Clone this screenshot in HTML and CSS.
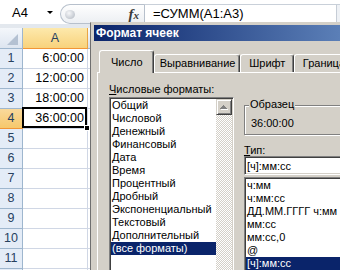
FILE: index.html
```html
<!DOCTYPE html>
<html>
<head>
<meta charset="utf-8">
<link rel="stylesheet" href="styles.css">
</head>
<body>
<div class="excel">
  <div class="fbar">
    <div class="namebox"><span class="nb-txt">A4</span><span class="dd"></span></div>
    <div class="pill"><span class="knob"></span><span class="fx">f<span class="fx-x">x</span></span></div>
    <div class="formula">=СУММ(A1:A3)</div>
    <div class="fexp"></div>
  </div>
  <div class="gap"></div>
  <div class="sheet">
    <div class="corner"><span class="tri"></span></div>
    <div class="ch sel">A</div>
    <div class="ch"></div>

    <div class="rh">1</div><div class="c">6:00:00</div><div class="c"></div>
    <div class="rh">2</div><div class="c">12:00:00</div><div class="c"></div>
    <div class="rh">3</div><div class="c">18:00:00</div><div class="c"></div>
    <div class="rh sel">4</div><div class="c act">36:00:00<span class="handle"></span></div><div class="c"></div>
    <div class="rh">5</div><div class="c"></div><div class="c"></div>
    <div class="rh">6</div><div class="c"></div><div class="c"></div>
    <div class="rh">7</div><div class="c"></div><div class="c"></div>
    <div class="rh">8</div><div class="c"></div><div class="c"></div>
    <div class="rh">9</div><div class="c"></div><div class="c"></div>
    <div class="rh">10</div><div class="c"></div><div class="c"></div>
    <div class="rh">11</div><div class="c"></div><div class="c"></div>
    <div class="rh"></div><div class="c"></div><div class="c"></div>
  </div>
</div>

<div class="dlg">
  <div class="title">Формат ячеек</div>
  <div class="dbody">
    <div class="tabs">
      <div class="tab sel t1">Число</div>
      <div class="tab t2">Выравнивание</div>
      <div class="tab t3">Шрифт</div>
      <div class="tab t4">Граница</div>
    </div>
    <div class="panel">
      <div class="lcol">
        <div class="lbl"><u>Ч</u>исловые форматы:</div>
        <div class="list cats">
          <div class="items">
            <div class="item">Общий</div>
            <div class="item">Числовой</div>
            <div class="item">Денежный</div>
            <div class="item">Финансовый</div>
            <div class="item">Дата</div>
            <div class="item">Время</div>
            <div class="item">Процентный</div>
            <div class="item">Дробный</div>
            <div class="item">Экспоненциальный</div>
            <div class="item">Текстовый</div>
            <div class="item">Дополнительный</div>
            <div class="item sel">(все форматы)</div>
          </div>
          <div class="vscroll">
            <div class="sbtn"><svg class="arrow" width="8" height="5" viewBox="0 0 8 5" shape-rendering="crispEdges"><path d="M4 1h1v1h1v1h1v1h1v1H1V4h1V3h1V2h1z" fill="#fff"/><path d="M3 0h1v1h1v1h1v1h1v1H0V3h1V2h1V1h1z" fill="#808080"/></svg></div>
            <div class="track"></div>
          </div>
        </div>
      </div>
      <div class="rcol">
        <div class="group">
          <span class="legend">Образец</span>
          <div class="sample">36:00:00</div>
        </div>
        <div class="lbl lbl-type"><u>Т</u>ип:</div>
        <div class="input">[ч]:мм:сс</div>
        <div class="list types">
          <div class="items">
            <div class="item">ч:мм</div>
            <div class="item">ч:мм:сс</div>
            <div class="item">ДД.ММ.ГГГГ ч:мм</div>
            <div class="item">мм:сс</div>
            <div class="item">мм:сс,0</div>
            <div class="item">@</div>
            <div class="item sel">[ч]:мм:сс</div>
          </div>
        </div>
      </div>
    </div>
  </div>
</div>
</body>
</html>
```

FILE: styles.css
```css
* { box-sizing: border-box; }
html, body { margin: 0; padding: 0; }
body {
  width: 340px;
  height: 270px;
  overflow: hidden;
  position: relative;
  background: #fff;
  font-family: "Liberation Sans", Arial, sans-serif;
  color: #000;
}

/* formula bar */
.fbar { display: flex; height: 24px; background: #fff; }
.namebox {
  width: 60px;
  display: flex;
  align-items: center;
  padding: 0 7px 0 12px;
  font-size: 13px;
}
.nb-txt { flex: 1; }
.dd {
  width: 0; height: 0;
  border-left: 3px solid transparent;
  border-right: 3px solid transparent;
  border-top: 3px solid #000;
  margin-top: 1px;
}
.pill {
  width: 84px;
  height: 20px;
  margin-top: 4px;
  border: 1px solid #b7c0cc;
  border-right: none;
  border-radius: 10px 0 0 10px;
  background: linear-gradient(#fefefe, #eceff3);
  display: flex;
  align-items: center;
}
.knob {
  width: 10px; height: 9px;
  margin-left: 4px;
  border-radius: 50%;
  background: radial-gradient(circle at 40% 35%, #f6f7f9, #aeb5bf);
}
.fx {
  margin-left: auto;
  margin-right: 5px;
  font-family: "Liberation Serif", serif;
  font-style: italic;
  font-weight: bold;
  font-size: 15px;
  color: #3a3a3a;
  line-height: 18px;
}
.fx-x { font-size: 11px; }
.formula {
  flex: 1;
  height: 20px;
  margin-top: 4px;
  border-top: 1px solid #c9d0d9;
  border-left: 1px solid #b7c0cc;
  padding-left: 8px;
  font-size: 13px;
  line-height: 18px;
}
.fexp {
  width: 4px;
  height: 20px;
  margin-top: 4px;
  border-left: 1px solid #c6cdd6;
  border-top: 1px solid #c9d0d9;
  background: #eef1f5;
}
.gap { height: 4px; background: #e3e8ee; }

/* sheet */
.sheet {
  display: grid;
  grid-template-columns: 23px 65px 1fr;
  grid-template-rows: 21px;
  grid-auto-rows: 20px;
}
.corner {
  background: linear-gradient(#f4f7fb, #dde5f0);
  border-right: 1px solid #9eb6ce;
  border-bottom: 1px solid #9eb6ce;
  display: flex;
  align-items: flex-end;
  justify-content: flex-end;
  padding: 0 4px 3px 0;
}
.tri {
  width: 0; height: 0;
  border-left: 11px solid transparent;
  border-bottom: 11px solid #b4c1d2;
}
.ch {
  background: linear-gradient(#f9fcfd, #d6dfec);
  border-right: 1px solid #9eb6ce;
  border-bottom: 1px solid #9eb6ce;
  text-align: center;
  font-size: 12.5px;
  line-height: 20px;
  color: #27415f;
}
.ch.sel {
  background: linear-gradient(#fde9ac, #f8d27c);
  border-right-color: #e9a545;
  border-bottom-color: #f29536;
}
.rh {
  background: #e4ecf7;
  border-right: 1px solid #9eb6ce;
  border-bottom: 1px solid #9eb6ce;
  color: #27415f;
  text-align: center;
  font-size: 12.5px;
  line-height: 19px;
}
.rh.sel {
  background: linear-gradient(#f9d99b, #f6c86c);
  border-bottom-color: #f29536;
  border-right-color: #e9a545;
}
.c {
  border-right: 1px solid #d0d7e5;
  border-bottom: 1px solid #d0d7e5;
  font-size: 12.5px;
  line-height: 19px;
  text-align: right;
  padding-right: 3px;
}
.c.act { position: relative; }
.c.act::after {
  content: "";
  position: absolute;
  left: -1px; top: -2px; right: 0; bottom: 0;
  border: 2px solid #000;
}
.handle {
  position: absolute;
  right: -3px; bottom: -3px;
  width: 6px; height: 6px;
  background: #000;
  border: 1px solid #fff;
  z-index: 2;
}

/* dialog */
.dlg {
  position: absolute;
  left: 90px;
  top: 22px;
  width: 272px;
  height: 260px;
  background: #d4d0c8;
  border-left: 1px solid #6f6f6f;
  border-top: 1px solid #d4d0c8;
  padding: 2px 0 0 3px;
  display: flex;
  flex-direction: column;
  font-size: 11px;
}
.title {
  height: 16px;
  line-height: 16px;
  padding-left: 2px;
  font-weight: bold;
  font-size: 12px;
  color: #fff;
  background: linear-gradient(90deg, #0a246a 0px, #5b7fb7 246px, #6787be 270px);
  white-space: nowrap;
}
.dbody { flex: 1; padding-top: 9px; display: flex; flex-direction: column; }
.tabs {
  display: flex;
  align-items: flex-end;
  height: 22px;
  margin-left: 5px;
}
.tab {
  height: 18px;
  border-top: 1px solid #fff;
  border-left: 1px solid #fff;
  border-right: 1px solid #404040;
  box-shadow: inset -1px 0 #808080;
  border-radius: 3px 3px 0 0;
  line-height: 16px;
  white-space: nowrap;
  overflow: hidden;
}
.tab.sel {
  height: 23px;
  margin-bottom: -1px;
  position: relative;
  z-index: 1;
  background: #d4d0c8;
  padding-top: 1px;
  line-height: 21px;
}
.t1 { width: 56px; padding-left: 11px; }
.t2 { width: 89px; padding-left: 5px; }
.t3 { width: 55px; padding-left: 8px; }
.t4 { width: 70px; padding-left: 8px; }
.panel {
  flex: 1;
  margin-left: 3px;
  border-top: 1px solid #fff;
  border-left: 1px solid #fff;
  display: flex;
  padding: 10px 0 0 11px;
}
.lcol { width: 127px; display: flex; flex-direction: column; }
.lbl { height: 12px; line-height: 12px; white-space: nowrap; }
.list {
  margin-top: 2px;
  background: #fff;
  border-top: 1px solid #808080;
  border-left: 1px solid #808080;
  border-bottom: 1px solid #fff;
  border-right: 1px solid #fff;
  box-shadow: inset 1px 1px #404040, inset -1px -1px #d4d0c8;
  padding: 1px;
  display: flex;
  overflow: hidden;
}
.cats { height: 190px; }
.types { height: 120px; }
.items { flex: 1; min-width: 0; }
.item {
  height: 13px;
  line-height: 13px;
  padding-left: 1px;
  white-space: nowrap;
  overflow: hidden;
}
.item.sel { background: #0a246a; color: #fff; }
.vscroll { width: 16px; display: flex; flex-direction: column; }
.sbtn {
  width: 16px; height: 16px;
  background: #d4d0c8;
  border-top: 1px solid #d4d0c8;
  border-left: 1px solid #d4d0c8;
  border-right: 1px solid #404040;
  border-bottom: 1px solid #404040;
  box-shadow: inset 1px 1px #fff, inset -1px -1px #808080;
  display: flex;
  align-items: center;
  justify-content: center;
}
.arrow { display: block; }
.track {
  flex: 1;
  background: repeating-conic-gradient(#fff 0% 25%, #d4d0c8 0% 50%) 0 0 / 2px 2px;
}
.rcol { margin-left: 10px; width: 120px; display: flex; flex-direction: column; }
.group {
  margin-top: 22px;
  height: 30px;
  border: 1px solid #808080;
  box-shadow: inset 1px 1px #fff, 1px 1px #fff;
}
.legend {
  display: block;
  width: fit-content;
  margin: -8px 0 0 4px;
  padding: 0 1px;
  background: #d4d0c8;
  line-height: 13px;
}
.sample { margin: 6px 0 0 6px; line-height: 13px; }
.lbl-type { margin-top: 9px; }
.input {
  height: 19px;
  background: #fff;
  border-top: 1px solid #808080;
  border-left: 1px solid #808080;
  border-bottom: 1px solid #fff;
  border-right: 1px solid #fff;
  box-shadow: inset 1px 1px #404040, inset -1px -1px #d4d0c8;
  padding: 2px 0 0 2px;
  line-height: 15px;
  white-space: nowrap;
}
```
